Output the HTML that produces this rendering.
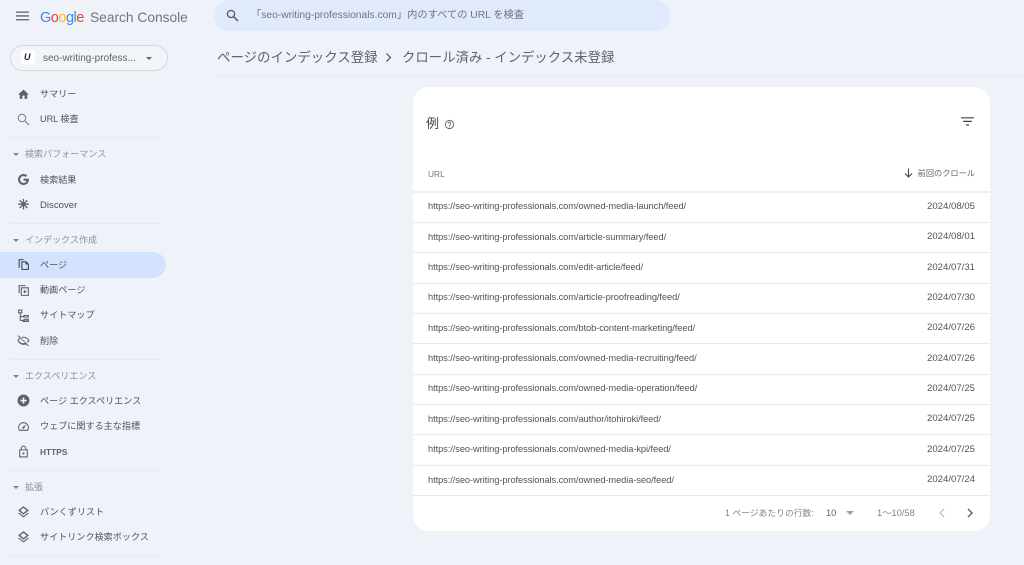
<!DOCTYPE html>
<html lang="ja"><head><meta charset="utf-8"><title>Search Console</title>
<style>
*{box-sizing:border-box}
html,body{margin:0;padding:0}
html{background:#eff3f9}
body{width:1024px;height:565px;overflow:hidden;position:relative;background:#eff3f9;font-family:"Liberation Sans","Noto Sans CJK JP",sans-serif;color:#444746;filter:blur(.3px)}
.t{position:absolute;white-space:nowrap;line-height:14px}
.nav{font-size:9.1px;left:40px;color:#4f5357}
.sec{font-size:9.05px;left:25px;color:#8b9095}
.tri{position:absolute;left:13px;width:0;height:0;border-left:3px solid transparent;border-right:3px solid transparent;border-top:3px solid #80868b}
.div{position:absolute;left:10px;width:149px;height:1px;background:#e6e9ee}
svg{position:absolute;display:block}
.i{left:17px;width:13px;height:13px;fill:#5f6368}
.line{position:absolute;left:413px;width:577px;height:1px;background:#e8eaed}
.u{font-size:9.3px;letter-spacing:-.08px;left:428px;color:#50555a}
.d{font-size:9.6px;right:49px;color:#50555a}
</style></head><body>
<svg style="left:16px;top:11px;width:13px;height:10px" viewBox="0 0 13 10"><path d="M0 0.5h13v1.3H0zM0 4.300h13v1.300H0zM0 8.100h13v1.300H0z" fill="#5f6368"/></svg>
<div class="t" style="left:40px;top:9px;font-size:14.500px;line-height:18px;letter-spacing:-.5px"><span style="color:#4285f4">G</span><span style="color:#ea4335">o</span><span style="color:#fbbc05">o</span><span style="color:#4285f4">g</span><span style="color:#34a853">l</span><span style="color:#ea4335">e</span></div>
<div class="t" style="left:90px;top:9px;font-size:13.750px;line-height:18px;color:#70757a">Search Console</div>

<div style="position:absolute;left:214px;top:0;width:457px;height:31px;border-radius:16px;background:#e0eafb"></div>
<svg style="left:226px;top:9px;width:13px;height:13px" viewBox="0 0 13 13"><circle cx="5" cy="5" r="3.600" fill="none" stroke="#5f6368" stroke-width="1.400"/><path d="M7.800 7.800 12 12" stroke="#5f6368" stroke-width="1.600"/></svg>
<div class="t" style="left:251px;top:9px;font-size:10.250px;color:#70757a">「seo-writing-professionals.com」内のすべての URL を検査</div>

<div style="position:absolute;left:10px;top:45px;width:158px;height:26px;border-radius:13px;border:1px solid #d3d7dc;background:#f1f4f9"></div>
<div style="position:absolute;left:21px;top:50px;width:14px;height:14px;background:#fff;border-radius:2px"></div>
<div class="t" style="left:24px;top:50px;font-size:9px;font-weight:bold;font-style:italic;color:#222">U</div>
<div class="t" style="left:43px;top:52px;font-size:10px;color:#5f6368">seo-writing-profess...</div>
<div class="tri" style="left:146px;top:57px;border-left-width:3.500px;border-right-width:3.500px;border-top:3.500px solid #5f6368"></div>

<svg class="i" style="top:88px" viewBox="0 0 24 24"><path d="M10 20v-6h4v6h5v-8h3L12 3 2 12h3v8z"/></svg>
<div class="t nav" style="top:87px">サマリー</div>
<svg class="i" style="top:113px" viewBox="0 0 13 13"><circle cx="5" cy="5" r="3.700" fill="none" stroke="#80868b" stroke-width="1.100"/><path d="M7.800 7.800 12 12" stroke="#80868b" stroke-width="1.200"/></svg>
<div class="t nav" style="top:112px">URL 検査</div>
<div class="div" style="top:137px"></div>

<div class="tri" style="top:153px"></div>
<div class="t sec" style="top:147px">検索パフォーマンス</div>
<svg class="i" style="top:173px" viewBox="0 0 24 24"><path d="M21.600 10.300H12v3.900h5.500c-.5 2.500-2.600 4-5.500 4a6.200 6.200 0 1 1 4-10.900l2.900-2.900A10.200 10.200 0 1 0 12 22.200c5.500 0 10-4 10-10.200 0-.6 0-1.100-.4-1.700z"/></svg>
<div class="t nav" style="top:173px">検索結果</div>
<svg class="i" style="top:198px" viewBox="0 0 24 24"><path d="M10.800 1.500h2.400v7l5-5 1.700 1.700-5 5h7v2.400h-7l5 5-1.700 1.700-5-5v7h-2.400v-7l-5 5-1.700-1.700 5-5h-7v-2.400h7l-5-5 1.700-1.700 5 5z"/></svg>
<div class="t nav" style="top:199px;font-size:9.600px">Discover</div>
<div class="div" style="top:223px"></div>

<div class="tri" style="top:239px"></div>
<div class="t sec" style="top:233px">インデックス作成</div>
<div style="position:absolute;left:0;top:252px;width:166px;height:26px;border-radius:0 13px 13px 0;background:#d3e3fd"></div>
<svg class="i" style="top:258px;fill:#3c4043" viewBox="0 0 24 24"><path d="M3 2h9v2H5v14H3zM8 6h9l5 5v11H8zm2 2v12h10v-8h-4V8z"/></svg>
<div class="t nav" style="top:258px">ページ</div>
<svg class="i" style="top:284px" viewBox="0 0 24 24"><path d="M3 2h13v2H5v13H3zM7 6h15v16H7zm2 2v12h11V8zm3.500 2.500 6 3.500-6 3.500z"/></svg>
<div class="t nav" style="top:283px">動画ページ</div>
<svg class="i" style="top:309px" viewBox="0 0 24 24"><path d="M2 1h8v7H7v5h5v-2h10v5H12v-1H7v5h5v-2h10v6H10v-2H5V8H2zm2 2v3h4V3zm10 10v1h6v-1zm0 7v1h6v-1z"/></svg>
<div class="t nav" style="top:308px">サイトマップ</div>
<svg class="i" style="top:334px" viewBox="0 0 24 24"><path d="M12 5c5 0 9 3 11 7-.7 1.600-1.800 3-3.200 4.100l-1.500-1.500c1-.7 1.800-1.600 2.400-2.600C19 9 15.800 7 12 7c-.8 0-1.600.1-2.300.3L8 5.600C9.300 5.200 10.600 5 12 5zM2.700 2.300 21.700 21.300 20.300 22.700l-3.300-3.300c-1.500.4-3.200.6-5 .6-5 0-9-3-11-8 .8-2 2.200-3.700 3.900-5L1.300 3.700zM12 17c1 0 2-.1 3-.3L6.300 8A9.300 9.300 0 0 0 3.200 12C5 15 8.200 17 12 17z"/></svg>
<div class="t nav" style="top:334px">削除</div>
<div class="div" style="top:359px"></div>

<div class="tri" style="top:375px"></div>
<div class="t sec" style="top:369px">エクスペリエンス</div>
<svg class="i" style="top:394px" viewBox="0 0 24 24"><path d="M12 1a11 11 0 1 0 0 22 11 11 0 0 0 0-22zm-1.500 5.500h3v4h4v3h-4v4h-3v-4h-4v-3h4z"/></svg>
<div class="t nav" style="top:394px">ページ エクスペリエンス</div>
<svg class="i" style="top:420px" viewBox="0 0 24 24"><path d="M12 4a10 10 0 0 1 10 10c0 2-.6 3.800-1.500 5.200l-.3.800H3.800l-.3-.8A10 10 0 0 1 12 4zm0 2a8 8 0 0 0-7 12h14a8 8 0 0 0-7-12zm5 2-3.300 6.300a2 2 0 1 1-2-2z"/></svg>
<div class="t nav" style="top:419px">ウェブに関する主な指標</div>
<svg class="i" style="top:445px" viewBox="0 0 24 24"><path d="M12 1a5 5 0 0 1 5 5v2h3v15H4V8h3V6a5 5 0 0 1 5-5zm0 2a3 3 0 0 0-3 3v2h6V6a3 3 0 0 0-3-3zM6 10v11h12V10zm6 3.500a2 2 0 1 1 0 4 2 2 0 0 1 0-4z"/></svg>
<div class="t nav" style="top:445px;font-size:8.400px;font-weight:bold;color:#5f6368">HTTPS</div>
<div class="div" style="top:470px"></div>

<div class="tri" style="top:486px"></div>
<div class="t sec" style="top:480px">拡張</div>
<svg class="i" style="top:505px" viewBox="0 0 24 24"><path d="M12 2 2 10l10 8 10-8zm0 3.200L17.800 10 12 14.800 6.200 10zM3.600 14 2 15.300l10 7.700 10-7.700L20.400 14 12 20.500z"/></svg>
<div class="t nav" style="top:505px">パンくずリスト</div>
<svg class="i" style="top:530px" viewBox="0 0 24 24"><path d="M12 2 2 10l10 8 10-8zm0 3.200L17.800 10 12 14.800 6.200 10zM3.600 14 2 15.300l10 7.700 10-7.700L20.400 14 12 20.500z"/></svg>
<div class="t nav" style="top:530px">サイトリンク検索ボックス</div>
<div class="div" style="top:555px"></div>

<div class="t" style="left:217px;top:49px;font-size:13.450px;line-height:18px;color:#5f6368">ページのインデックス登録</div>
<svg style="left:385px;top:52px;width:8px;height:11px" viewBox="0 0 8 11"><path d="M1.500 1.500 5.500 5.500 1.500 9.500" fill="none" stroke="#5f6368" stroke-width="1.300"/></svg>
<div class="t" style="left:402px;top:49px;font-size:13.400px;line-height:18px;color:#5f6368">クロール済み - インデックス未登録</div>
<div style="position:absolute;left:215px;top:76px;width:809px;height:1px;background:#e6e9ee"></div>

<div style="position:absolute;left:413px;top:87px;width:577px;height:444px;border-radius:16px;background:#fff"></div>
<div class="t" style="left:426px;top:115px;font-size:13px;line-height:18px;color:#444746">例</div>
<svg style="left:444px;top:119px;width:11px;height:11px" viewBox="0 0 24 24"><path d="M12 2a10 10 0 1 0 0 20 10 10 0 0 0 0-20zm0 2a8 8 0 1 1 0 16 8 8 0 0 1 0-16zm-1 12h2v2h-2zm1-10a4 4 0 0 0-4 4h2a2 2 0 1 1 3.400 1.400C12.300 12.500 11 13.300 11 15h2c0-1.200 1-1.700 2-2.700A4 4 0 0 0 12 6z" fill="#5f6368"/></svg>
<svg style="left:961px;top:117px;width:13px;height:9px" viewBox="0 0 13 9"><path d="M0 .2h13v1.200H0zM2.200 3.800h8.600V5H2.200zM5 7.400h3v1.200H5z" fill="#3c4043"/></svg>
<div class="t" style="left:428px;top:167px;font-size:8.400px;color:#70757a">URL</div>
<svg style="left:904px;top:168px;width:9px;height:10px" viewBox="0 0 9 10"><path d="M4.500 .5v8.500M1 5.500 4.500 9 8 5.500" fill="none" stroke="#444746" stroke-width="1.100"/></svg>
<div class="t" style="right:49px;top:167px;font-size:8.200px;color:#5f6368">前回のクロール</div>

<div class="line" style="top:191px;height:2px;background:#eceef0"></div>
<div class="line" style="top:222px"></div>
<div class="line" style="top:252px"></div>
<div class="line" style="top:283px"></div>
<div class="line" style="top:313px"></div>
<div class="line" style="top:343px"></div>
<div class="line" style="top:374px"></div>
<div class="line" style="top:404px"></div>
<div class="line" style="top:434px"></div>
<div class="line" style="top:465px"></div>
<div class="line" style="top:495px"></div>

<div class="t u" style="top:199px">https://seo-writing-professionals.com/owned-media-launch/feed/</div><div class="t d" style="top:200px">2024/08/05</div>
<div class="t u" style="top:230px">https://seo-writing-professionals.com/article-summary/feed/</div><div class="t d" style="top:230px">2024/08/01</div>
<div class="t u" style="top:260px">https://seo-writing-professionals.com/edit-article/feed/</div><div class="t d" style="top:261px">2024/07/31</div>
<div class="t u" style="top:290px">https://seo-writing-professionals.com/article-proofreading/feed/</div><div class="t d" style="top:291px">2024/07/30</div>
<div class="t u" style="top:321px">https://seo-writing-professionals.com/btob-content-marketing/feed/</div><div class="t d" style="top:321px">2024/07/26</div>
<div class="t u" style="top:351px">https://seo-writing-professionals.com/owned-media-recruiting/feed/</div><div class="t d" style="top:352px">2024/07/26</div>
<div class="t u" style="top:381px">https://seo-writing-professionals.com/owned-media-operation/feed/</div><div class="t d" style="top:382px">2024/07/25</div>
<div class="t u" style="top:412px">https://seo-writing-professionals.com/author/itohiroki/feed/</div><div class="t d" style="top:412px">2024/07/25</div>
<div class="t u" style="top:442px">https://seo-writing-professionals.com/owned-media-kpi/feed/</div><div class="t d" style="top:443px">2024/07/25</div>
<div class="t u" style="top:473px">https://seo-writing-professionals.com/owned-media-seo/feed/</div><div class="t d" style="top:473px">2024/07/24</div>

<div class="t" style="left:725px;top:506px;font-size:8.800px;color:#80868b">1 ページあたりの行数:</div>
<div class="t" style="left:826px;top:506px;font-size:9.300px;color:#5f6368">10</div>
<div class="tri" style="left:846px;top:511px;border-left-width:4px;border-right-width:4px;border-top:4px solid #9aa0a6"></div>
<div class="t" style="left:877px;top:506px;font-size:9.300px;color:#80868b">1〜10/58</div>
<svg style="left:939px;top:508px;width:6px;height:10px" viewBox="0 0 6 10"><path d="M5 1 1 5l4 4" fill="none" stroke="#bdc1c6" stroke-width="1.300"/></svg>
<svg style="left:967px;top:508px;width:6px;height:10px" viewBox="0 0 6 10"><path d="M1 1l4 4-4 4" fill="none" stroke="#5f6368" stroke-width="1.500"/></svg>
</body></html>
